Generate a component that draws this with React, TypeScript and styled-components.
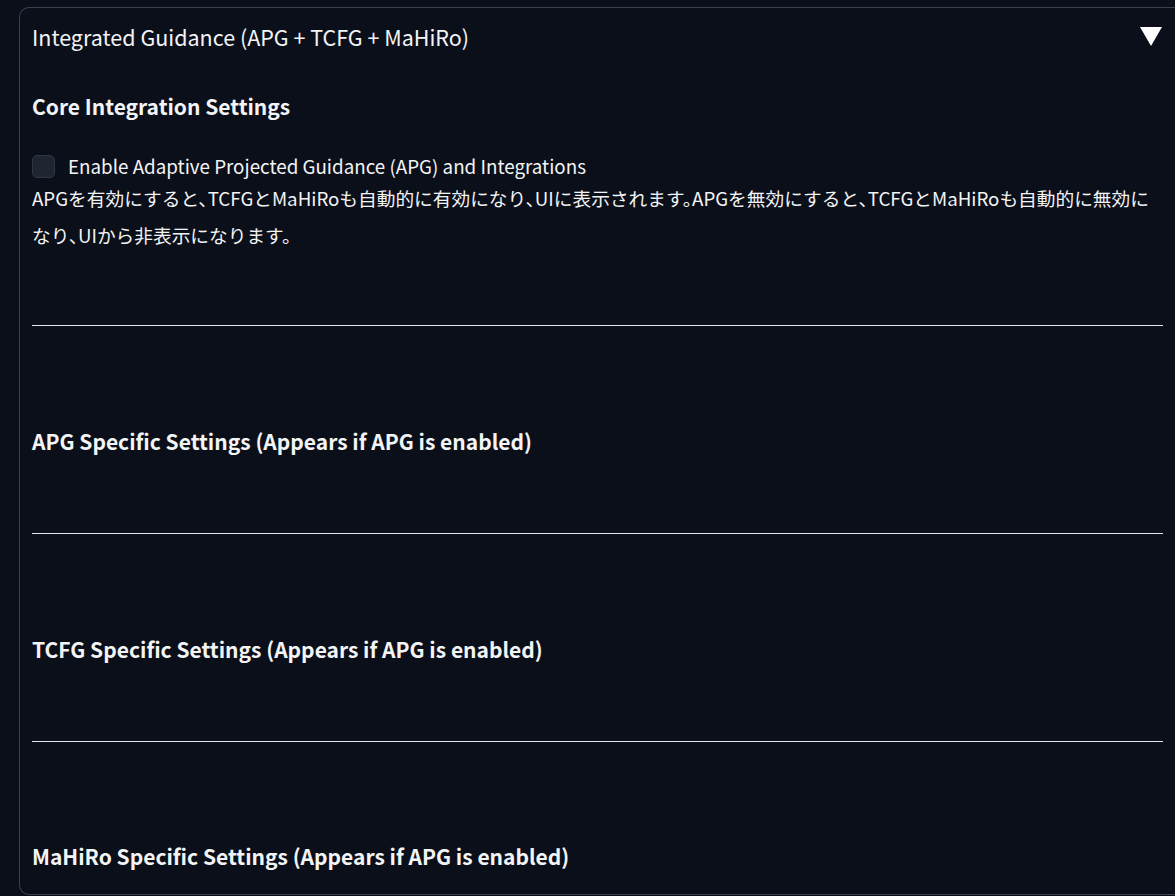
import React from "react";
import styled, { createGlobalStyle } from "styled-components";

const Global = createGlobalStyle`
  html, body {
    margin: 0;
    padding: 0;
    background: #0b0f19;
  }
  body {
    font-family: "Noto Sans CJK JP", "Noto Sans", sans-serif;
    color: #f3f4f6;
  }
`;

const Page = styled.div`
  padding: 7px 0 0 19px;
  min-height: 896px;
  box-sizing: border-box;
`;

const Panel = styled.div`
  border: 1px solid #374151;
  border-right: none;
  border-radius: 10px 0 0 10px;
  padding: 0 0 26px 12px;
  height: 888px;
  box-sizing: border-box;
  overflow: hidden;
`;

const Header = styled.div`
  display: flex;
  align-items: center;
  justify-content: space-between;
  height: 56px;
  padding-right: 13px;
`;

const Title = styled.span`
  font-size: 21.5px;
  font-weight: 400;
`;

const Arrow = styled.span`
  width: 0;
  height: 0;
  border-left: 11px solid transparent;
  border-right: 11px solid transparent;
  border-top: 19px solid #ffffff;
`;

const Body = styled.div`
  padding-right: 12px;
`;

const Heading = styled.h3<{ $top: number }>`
  margin: ${(p) => p.$top}px 0 0;
  font-size: 21px;
  font-weight: 700;
  line-height: 28px;
`;

const CheckRow = styled.label`
  display: flex;
  align-items: center;
  gap: 13px;
  margin-top: 34px;
  font-size: 18.8px;
  line-height: 24px;
`;

const Box = styled.span`
  width: 23px;
  height: 23px;
  box-sizing: border-box;
  border-radius: 5px;
  background: #1f2531;
  border: 1px solid #2f3745;
`;

const Info = styled.p`
  margin: 1px 0 0;
  font-size: 18.7px;
  line-height: 37px;
  font-feature-settings: "halt";
`;

const Rule = styled.hr<{ $top: number }>`
  margin: ${(p) => p.$top}px 0 0;
  border: none;
  height: 1px;
  background: #e5e7eb;
`;

export default function App() {
  return (
    <>
      <Global />
      <Page>
        <Panel>
          <Header>
            <Title>Integrated Guidance (APG + TCFG + MaHiRo)</Title>
            <Arrow />
          </Header>
          <Body>
            <Heading $top={28}>Core Integration Settings</Heading>
            <CheckRow>
              <Box />
              Enable Adaptive Projected Guidance (APG) and Integrations
            </CheckRow>
            <Info>
              APGを有効にすると、TCFGとMaHiRoも自動的に有効になり、UIに表示されます。APGを無効にすると、TCFGとMaHiRoも自動的に無効になり、UIから非表示になります。
            </Info>
            <Rule $top={72} />
            <Heading $top={101}>APG Specific Settings (Appears if APG is enabled)</Heading>
            <Rule $top={78} />
            <Heading $top={101}>TCFG Specific Settings (Appears if APG is enabled)</Heading>
            <Rule $top={78} />
            <Heading $top={100}>MaHiRo Specific Settings (Appears if APG is enabled)</Heading>
          </Body>
        </Panel>
      </Page>
    </>
  );
}
